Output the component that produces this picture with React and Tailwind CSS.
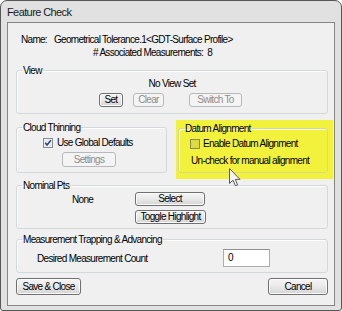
import React from 'react';

const font = "font-['Liberation_Sans',Arial,sans-serif]";

function Button({ children, className = '', disabled }) {
  return (
    <button
      disabled={disabled}
      className={`flex items-center justify-center rounded-[3px] border leading-none whitespace-nowrap ${
        disabled
          ? 'border-[#b5b9bc] bg-[#f4f4f4] text-[#8d8d8d]'
          : 'border-[#707070] bg-linear-to-b from-[#f5f5f5] via-[#e9e9e9] to-[#d4d4d4] text-black shadow-[inset_0_0_0_1px_#fbfbfb]'
      } ${className}`}
    >
      {children}
    </button>
  );
}

function GroupBox({ label, className = '', children }) {
  return (
    <fieldset className={`rounded-[3px] border border-[#d3d8db] shadow-[inset_1px_1px_0_#ffffff] px-0 ${className}`}>
      <legend className="ml-[5px] px-[1px] h-[13px] leading-[13px]">{label}</legend>
      {children}
    </fieldset>
  );
}

function CheckedBox() {
  return (
    <svg width="10" height="10" viewBox="0 0 10 10" className="shrink-0">
      <rect x="0.5" y="0.5" width="9" height="9" fill="#f4f4f4" stroke="#8a8b8c" />
      <rect x="1.5" y="1.5" width="7" height="7" fill="#e6e9ee" />
      <path d="M2.2 4.8 L4 6.9 L7.9 2.2" fill="none" stroke="#2f4a7e" strokeWidth="1.6" />
    </svg>
  );
}

function EmptyBox() {
  return (
    <svg width="10" height="10" viewBox="0 0 10 10" className="shrink-0">
      <rect x="0.5" y="0.5" width="9" height="9" fill="none" stroke="#8c8b5a" />
      <rect x="1.5" y="1.5" width="7" height="7" fill="#dcdc46" stroke="#cfcf4a" strokeWidth="0.6" />
    </svg>
  );
}

export default function App() {
  return (
    <div className={`relative w-[342px] h-[311px] bg-white text-[10px] tracking-[-0.7px] text-black whitespace-nowrap ${font}`}>
      <div className="w-[342px] h-[311px] border border-[#575757] rounded-t-[7px] rounded-b-[3px] bg-[#e1e1e1] flex flex-col">
        <div className="h-[21px] pl-[6px] pt-[1px] flex items-center text-[11px] tracking-[-0.6px] text-[#1a1a1a]">Feature Check</div>
        <div className="ml-[6px] w-[328px] h-[284px] border border-[#858585] bg-[#f0f0f0] flex flex-col">
          <div className="mt-[10px] pl-[13px] h-[13px] leading-[13px] flex">
            <span>Name:</span>
            <span className="ml-[7px]">Geometrical Tolerance.1&lt;GDT-Surface Profile&gt;</span>
          </div>
          <div className="pl-[85px] h-[13px] leading-[13px]">
            # Associated Measurements:&nbsp; 8
          </div>

          <GroupBox label="View" className="mt-[5px] ml-[8px] w-[312px] h-[50px]">
            <div className="h-[13px] leading-[13px] text-center">No View Set</div>
            <div className="mt-[3px] flex">
              <Button className="ml-[82px] w-[24px] h-[14px]">Set</Button>
              <Button disabled className="ml-[10px] w-[31px] h-[14px]">Clear</Button>
              <Button disabled className="ml-[25px] w-[53px] h-[14px]">Switch To</Button>
            </div>
          </GroupBox>

          <div className="mt-[6px] flex items-start">
            <GroupBox label="Cloud Thinning" className="mt-[1px] ml-[8px] w-[151px] h-[52px]">
              <div className="mt-[2px] h-[13px] flex items-center">
                <div className="ml-[26px]">
                  <CheckedBox />
                </div>
                <span className="ml-[4px] leading-[13px]">Use Global Defaults</span>
              </div>
              <Button disabled className="mt-[3px] ml-[45px] w-[54px] h-[15px]">Settings</Button>
            </GroupBox>

            <div className="ml-[9px] w-[157px] h-[59px] bg-[#f2f23c] pt-[2px] pl-[2px]">
              <GroupBox label="Datum Alignment" className="w-[150px] h-[51px] border-[#d9d98e] shadow-[inset_1px_1px_0_#fafa9a]">
                <div className="mt-[2px] h-[13px] flex items-center">
                  <div className="ml-[11px]">
                    <EmptyBox />
                  </div>
                  <span className="ml-[3px] leading-[13px]">Enable Datum Alignment</span>
                </div>
                <div className="mt-[4px] ml-[12px] h-[13px] leading-[13px]">Un-check for manual alignment</div>
              </GroupBox>
            </div>
          </div>

          <GroupBox label="Nominal Pts" className="ml-[8px] w-[312px] h-[50px]">
            <div className="h-[14px] flex items-center">
              <span className="w-[118px] pl-[55px] leading-[13px]">None</span>
              <Button className="w-[70px] h-[14px]">Select</Button>
            </div>
            <Button className="mt-[4px] ml-[118px] w-[71px] h-[14px]">Toggle Highlight</Button>
          </GroupBox>

          <GroupBox label="Measurement Trapping &amp; Advancing" className="mt-[4px] ml-[8px] w-[312px] h-[40px]">
            <div className="mt-[3px] flex items-center">
              <span className="w-[206px] pl-[20px] leading-[13px]">Desired Measurement Count</span>
              <div className="w-[47px] h-[18px] border border-[#abadb3] border-t-[#8e8f8f] bg-white pl-[4px] flex items-center leading-none">
                0
              </div>
            </div>
          </GroupBox>

          <div className="mt-[5px] ml-[8px] w-[312px] flex justify-between">
            <Button className="w-[65px] h-[17px]">Save &amp; Close</Button>
            <Button className="w-[60px] h-[17px]">Cancel</Button>
          </div>
        </div>
      </div>

      <svg
        className="absolute left-[229px] top-[168px]"
        width="12"
        height="19"
        viewBox="0 0 12 19"
      >
        <path
          d="M0.5 0.5 L0.5 15.5 L4 12.2 L6.4 17.8 L8.6 16.9 L6.3 11.4 L11 11.4 Z"
          fill="#f4f4f4"
          stroke="#5a5a5a"
          strokeWidth="1"
          strokeLinejoin="round"
        />
      </svg>
    </div>
  );
}
